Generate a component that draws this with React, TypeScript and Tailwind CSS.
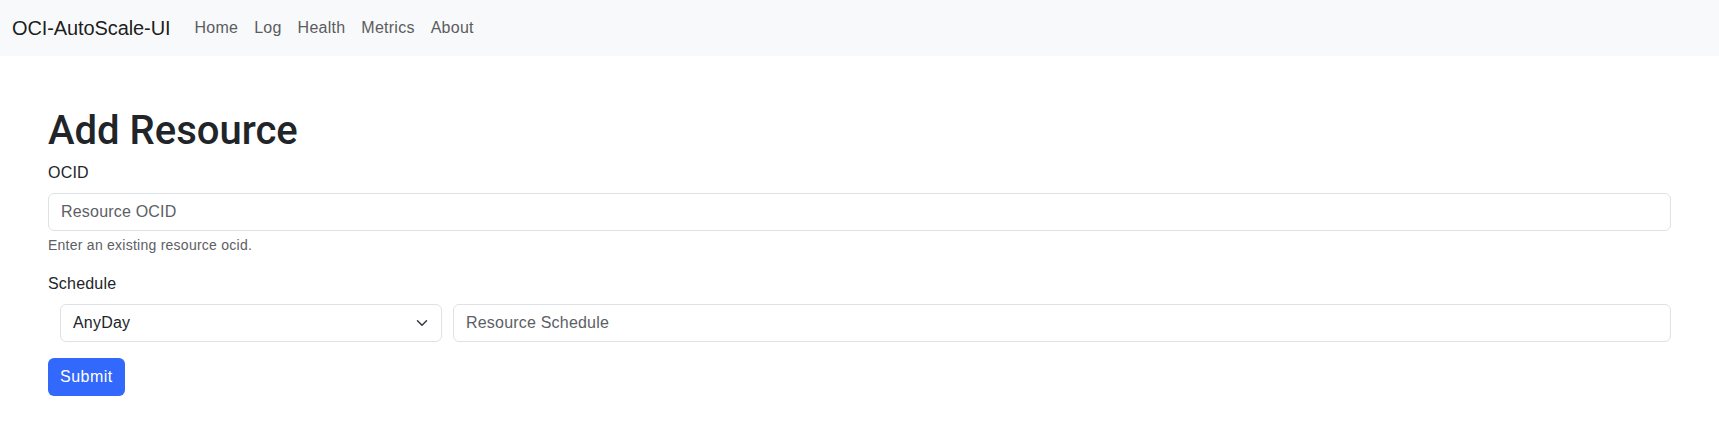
import React from "react";

function Chevron() {
  return (
    <svg width="16" height="12" viewBox="0 0 16 16" className="pointer-events-none absolute right-[12px] top-1/2 -translate-y-1/2">
      <path fill="none" stroke="#343a40" strokeLinecap="round" strokeLinejoin="round" strokeWidth="2" d="m2 5 6 6 6-6" />
    </svg>
  );
}

export default function App() {
  const font = { fontFamily: "'Liberation Sans', Arial, sans-serif" };
  return (
    <div className="min-h-[430px] bg-white text-[#212529]" style={font}>
      <nav className="flex h-[56px] items-center bg-[#f8f9fa] px-[12px]">
        <a className="mr-[16px] text-[20px] leading-[30px] tracking-[-0.1px] text-[#000000e6]">OCI-AutoScale-UI</a>
        <div className="flex text-[16px] tracking-[0.25px] text-[#5b5c5e]">
          <a className="px-[8px] py-[8px]">Home</a>
          <a className="px-[8px] py-[8px]">Log</a>
          <a className="px-[8px] py-[8px]">Health</a>
          <a className="px-[8px] py-[8px]">Metrics</a>
          <a className="px-[8px] py-[8px]">About</a>
        </div>
      </nav>
      <div className="px-[48px] pb-[48px] pt-[49px]">
        <h1 className="mb-[6px] pt-[2px] text-[40px] font-medium leading-[48px] [font-family:Roboto,'Liberation_Sans',sans-serif]">Add Resource</h1>
        <div className="mb-[16px]">
          <label className="mb-[8px] block text-[16px] leading-[24px] tracking-[0.2px]">OCID</label>
          <input
            className="block h-[38px] w-full rounded-[6px] border border-[#dee2e6] px-[12px] text-[16px] tracking-[0.2px] outline-none placeholder:text-[#5c6064]"
            placeholder="Resource OCID"
          />
          <div className="mt-[4px] text-[14px] leading-[21px] tracking-[0.25px] text-[#5c6064]">Enter an existing resource ocid.</div>
        </div>
        <div className="mb-[16px]">
          <label className="mb-[8px] block text-[16px] leading-[24px] tracking-[0.2px]">Schedule</label>
          <div className="flex gap-[11px] pl-[12px]">
            <div className="relative w-[382px]">
              <select className="block h-[38px] w-full appearance-none rounded-[6px] border border-[#dee2e6] bg-white px-[12px] text-[16px] tracking-[0.2px] text-[#212529] outline-none">
                <option>AnyDay</option>
              </select>
              <Chevron />
            </div>
            <input
              className="block h-[38px] flex-1 rounded-[6px] border border-[#dee2e6] px-[12px] text-[16px] tracking-[0.2px] outline-none placeholder:text-[#5c6064]"
              placeholder="Resource Schedule"
            />
          </div>
        </div>
        <button className="h-[38px] rounded-[6px] bg-[#3268fb] px-[12px] text-[16px] tracking-[0.5px] text-white">Submit</button>
      </div>
    </div>
  );
}
